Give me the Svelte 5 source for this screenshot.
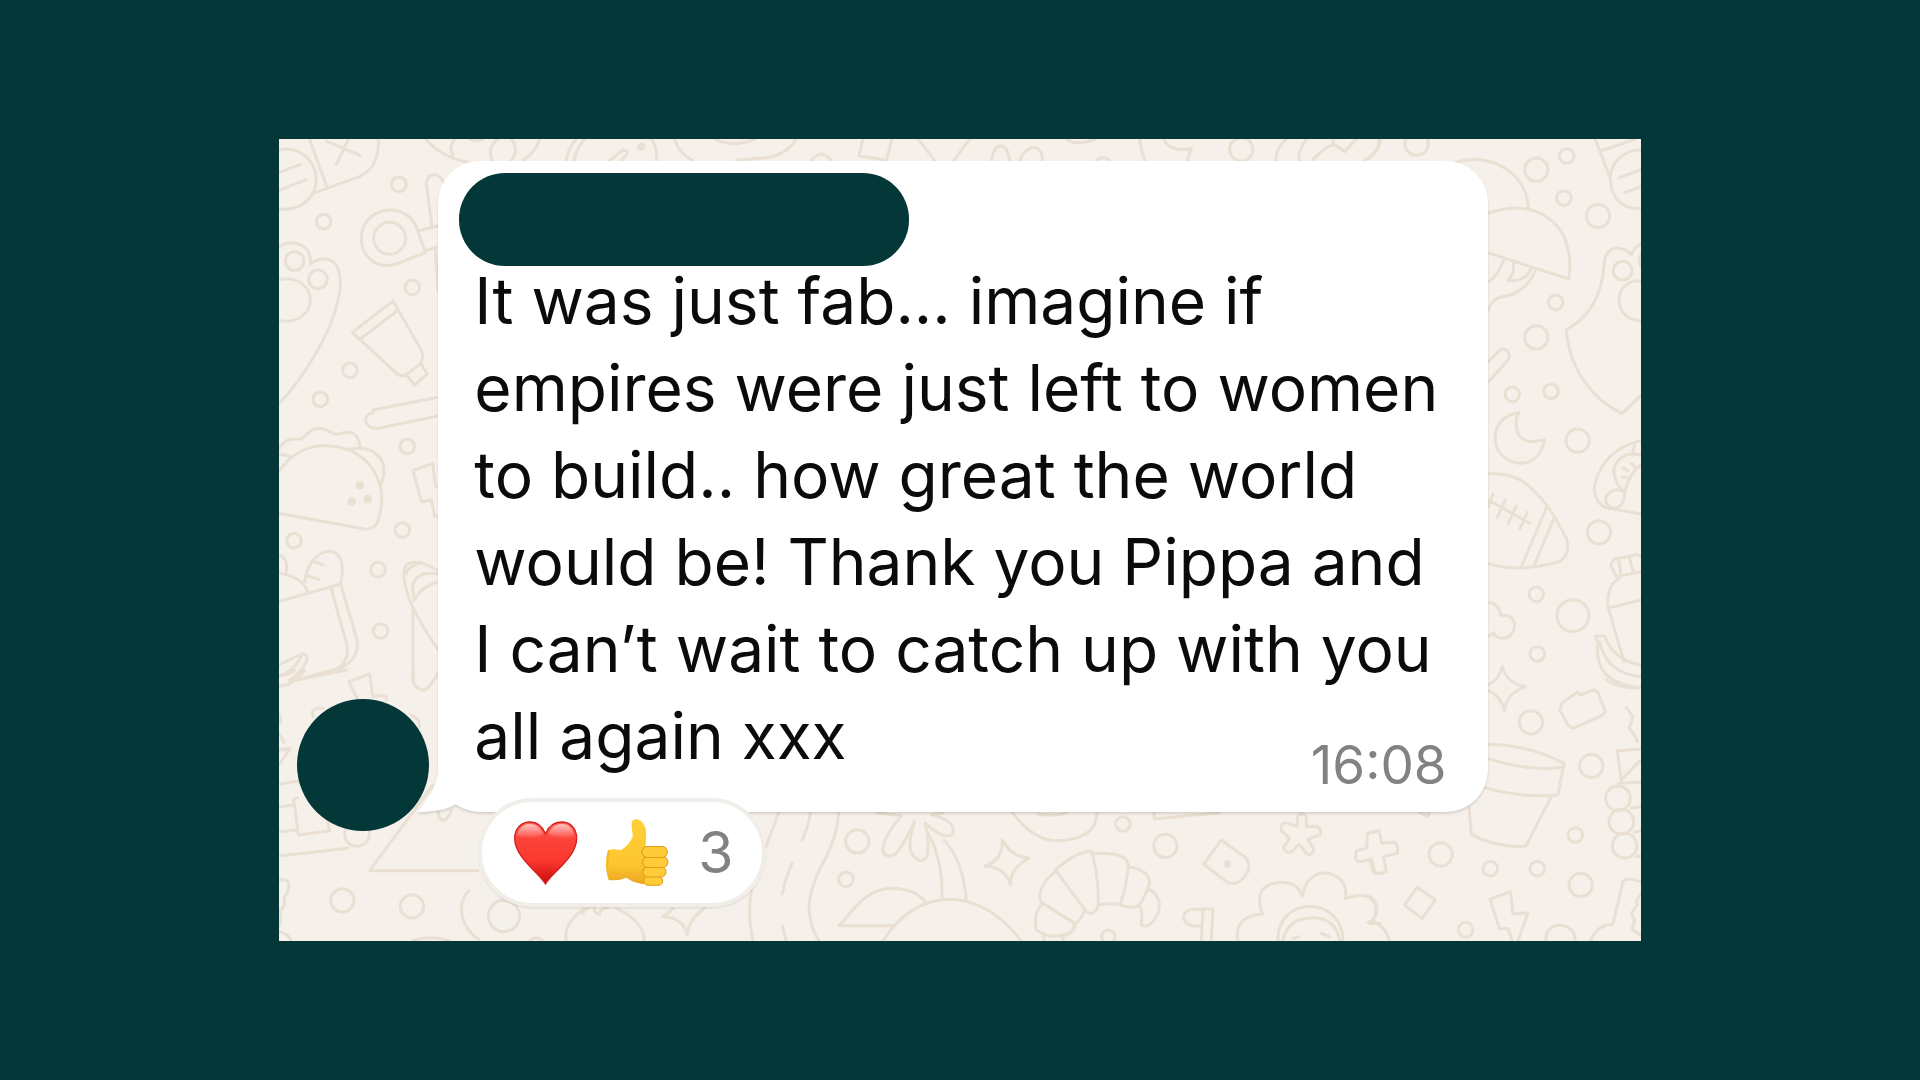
<!--
@component
A single group chat message on doodle wallpaper, with its sender details covered and a reactions pill below.
-->

<script lang="ts">
	interface Doodle {
		x: number;
		y: number;
		paths: string[];
		rings?: number[][];
		dots?: number[][];
	}

	const lines = [
		'It was just fab... imagine if',
		'empires were just left to women',
		'to build.. how great the world',
		'would be! Thank you Pippa and',
		'I can’t wait to catch up with you',
		'all again xxx'
	];
	const time = '16:08';
	const reactionCount = 3;

	// Each patch is drawn at three times its size, from its own origin
	const doodles: Doodle[] = [
		{
			x: 270,
			y: 130,
			paths: [
				'M120 28L172 172M130 190L270 140Q330 110 326 28M172 34L272 76M236 28L200 104',
				'M27 60C90 45 140 95 140 148C140 205 90 245 27 237M27 128L94 103M27 182L110 148',
				'M470 28Q510 80 600 98M555 28Q535 55 550 75',
				'M468 368L380 402C320 420 275 380 275 325C275 270 320 240 360 240C400 240 425 260 440 290Z',
				'M448 302L505 288M468 362L505 350M487 290L470 160Q475 130 500 135Q515 140 520 155M497 355L505 480',
				'M27 350Q60 330 95 345Q125 360 122 402Q160 375 190 395C220 420 215 480 200 530C180 610 100 750 27 822',
				'M27 450C80 435 122 470 122 510C122 550 80 585 27 570',
				'M370 513L248 607L375 725Q390 742 408 735L450 703Q465 685 455 660ZM272 627L382 543M410 735L435 765L473 732L455 703',
				'M310 840L505 802'
			],
			rings: [[388, 163, 22], [162, 275, 22], [428, 472, 22], [241, 721, 22], [152, 808, 22], [360, 325, 48], [75, 393, 28], [145, 448, 28]]
		},
		{
			x: 270,
			y: 400,
			paths: [
				'M310 38Q275 50 295 75Q305 88 330 84L505 48M27 10L40 0',
				'M27 150C40 120 60 115 95 117C120 100 120 85 150 85C180 88 185 105 205 103C240 90 265 95 272 140',
				'M27 215C70 155 120 135 175 137C260 140 310 190 330 250C342 290 335 340 322 370Q310 390 285 387L27 340',
				'M240 148C300 135 345 165 343 215Q342 235 335 250M27 165Q45 162 62 170',
				'M505 262L497 255L489 190L430 212L456 305L485 300L495 348L505 350',
				'M27 465Q55 470 50 515M27 518C80 530 105 545 115 580M27 605L213 552L262 720Q270 775 215 803L80 840M185 567L232 735Q240 780 205 805',
				'M105 545C110 500 140 455 180 453Q225 460 217 525L213 552M130 483L160 495M110 527L147 538',
				'M27 795L90 765Q115 755 112 780Q95 820 60 840M27 828Q70 815 95 770',
				'M505 513C460 485 430 480 410 495Q395 520 412 575Q430 640 505 748M505 522Q440 510 428 560L434 600Q455 560 505 545M430 625V840M410 520Q415 500 455 488'
			],
			rings: [[413, 139, 22], [398, 390, 22], [73, 422, 22], [325, 509, 22], [333, 693, 22]],
			dots: [[271, 256, 13], [294, 297, 13], [246, 305, 13]]
		},
		{
			x: 270,
			y: 670,
			paths: [
				'M27 18Q60 15 75 0M27 48Q70 48 105 0M80 30L230 0M430 0V30Q435 60 465 60Q480 55 505 10',
				'M265 88L237 35L300 12L310 80Q355 70 350 90M130 140Q120 110 160 115M425 135Q450 145 450 170',
				'M27 130Q40 150 30 160M27 190Q35 200 42 217M27 240L62 235L27 285M27 342L90 333M27 412L70 405M27 485L82 480M85 383L72 388L86 495L180 483L175 460M27 558L235 535',
				'M490 345L300 602H625M505 425Q510 455 525 450Q540 440 545 420',
				'M598 662Q560 700 585 760Q600 790 630 812M27 630Q60 625 57 650Q55 670 42 685Q50 705 30 725Q40 750 27 770M27 785Q55 790 65 812M430 812Q480 795 540 812M780 812Q800 795 820 812'
			],
			rings: [[262, 492, 37], [218, 691, 35], [427, 709, 35], [703, 738, 47]]
		},
		{
			x: 460,
			y: 780,
			paths: [
				'M320 483Q310 430 375 385M470 385Q550 420 555 483M370 400Q385 375 405 380Q400 400 420 403Q420 385 445 383',
				'M640 385Q620 405 608 410Q670 410 683 465Q685 420 735 385M957 98Q900 250 880 310Q860 390 880 483'
			]
		},
		{
			x: 760,
			y: 790,
			paths: [
				'M152 68L145 105L127 152M98 218Q75 270 68 312M68 408L80 453M237 68Q235 130 200 200Q150 290 148 350Q150 410 178 453',
				'M350 68L425 77Q365 150 370 185Q385 210 410 190Q440 150 465 93Q440 170 460 195Q485 225 502 200Q510 160 497 100Q560 155 580 130Q590 90 515 75L550 68',
				'M505 130Q550 210 547 325M553 150Q610 210 620 328M500 340Q470 295 390 295C320 300 290 350 238 407H400M370 453Q450 330 570 328Q690 330 785 453',
				'M728 150Q755 200 808 205Q750 235 753 284Q735 230 675 229Q730 210 728 150Z',
				'M758 68Q820 150 890 152Q1010 150 1012 68M835 72Q880 80 920 70',
				'M887 245Q840 280 840 325L848 340Q820 370 830 420Q870 445 900 437Q950 430 945 400L848 340M853 430V453M910 440V453'
			],
			rings: [[293, 154, 35], [259, 268, 22]]
		},
		{
			x: 1060,
			y: 790,
			paths: [
				'M283 68V87L480 68',
				'M-13 240Q50 185 95 183L100 200Q120 280 115 350Q100 380 80 365L-13 240M105 190Q200 185 207 225Q200 290 182 343Q150 338 118 345',
				'M207 230Q270 240 270 280Q250 340 230 350Q210 355 182 345M268 298Q310 320 295 370Q270 420 245 405Q250 370 240 345M75 360Q60 400 45 400L-50 340M45 400Q40 440 0 437',
				'M485 150L432 222L500 275Q530 290 550 265Q580 235 560 205Z',
				'M712 110L714 80Q725 62 740 80V110L770 108Q790 120 780 135L745 148L762 175Q760 198 742 192L718 162L697 185Q678 192 672 172L690 145L665 122Q660 100 680 98Z',
				'M958 122L925 128L922 140V175L890 182L887 200Q890 215 900 215L935 208L947 250L960 250',
				'M535 453Q520 380 608 372Q580 290 650 278Q710 270 728 318Q740 250 800 248Q865 260 858 325Q940 300 952 350Q955 385 925 398L960 400',
				'M655 453C650 315 850 315 850 453M670 453Q680 385 760 383Q830 385 840 453M700 445L718 440M785 430L810 440',
				'M425 453L430 357H460L455 453M430 357L395 358Q370 365 372 385Q380 410 410 408L427 408'
			],
			rings: [[190, 102, 22], [317, 168, 35], [146, 440, 20]],
			dots: [[504, 222, 11]]
		},
		{
			x: 1370,
			y: 130,
			paths: [
				'M0 85Q30 60 27 28M255 97C370 65 470 130 477 235',
				'M354 250Q440 220 500 245C590 280 610 370 597 447L354 368M403 388Q385 440 354 457M432 400L430 430L415 452Q470 455 485 415M497 422Q465 495 390 502Q365 510 354 545',
				'M354 697L390 660Q410 650 420 675L415 690L354 758',
				'M677 28L722 145M693 63L795 28M813 60C750 60 720 110 722 150C725 210 765 238 813 235M748 143L813 120M766 188L813 170',
				'M813 343Q790 355 785 375Q765 350 730 355Q702 370 703 410C695 500 660 560 590 600C600 720 670 810 757 850L813 797',
				'M813 452C770 450 747 480 748 512Q755 570 813 572M813 375Q805 393 813 410'
			],
			rings: [[141, 41, 35], [500, 119, 35], [685, 258, 35], [500, 622, 35], [591, 78, 22], [583, 204, 22], [558, 517, 22], [428, 793, 22], [544, 784, 22], [759, 422, 28]]
		},
		{
			x: 1370,
			y: 420,
			paths: [
				'M440 0Q435 60 485 65L525 60C515 105 490 130 450 130C400 125 376 90 376 50C380 10 400 -15 447 -22Q440 -10 440 0',
				'M354 162Q440 155 490 210C540 255 560 300 590 355Q605 400 570 425Q440 460 354 430M533 257L455 440M553 295L492 440',
				'M357 240L480 310M370 222L355 262M407 240L383 292M440 258L416 310M473 277L450 328',
				'M813 62Q700 90 675 195Q670 240 705 262L813 282M795 70L788 105M813 105Q750 90 732 150Q735 190 762 215M813 135Q780 160 765 215Q765 260 735 265Q700 255 710 230Q730 200 762 215M762 145L775 152M785 130L795 140M758 172H770',
				'M813 410L805 403L735 418Q720 430 725 440L740 470L813 455M748 425L755 465M780 415L790 455M748 475Q710 500 715 560L763 725M722 563L813 540',
				'M813 735Q730 720 705 648H677L685 670Q670 790 813 803M690 665Q710 760 813 770',
				'M354 547Q390 550 393 587Q430 580 435 615Q430 655 398 655Q380 655 372 638L354 650',
				'M354 795Q390 780 398 738Q410 790 468 800Q410 820 405 872Q395 830 354 810'
			],
			rings: [[624, 62, 35], [688, 337, 35], [500, 523, 22], [610, 587, 48], [503, 702, 22]]
		},
		{
			x: 1370,
			y: 680,
			paths: [
				'M0 460L28 452L37 490L75 487Q88 500 83 520L42 530L50 575Q30 585 12 578L0 540',
				'M578 68L625 35L632 45L670 30Q685 30 690 50L707 95Q700 105 690 110L610 145Q595 140 590 125L570 90Z',
				'M710 0Q760 30 813 22M770 83L790 110Q785 130 778 145Q795 160 803 185',
				'M354 193Q480 195 583 250L565 345Q460 355 345 323M354 235Q470 275 583 262M545 350L473 490Q470 502 445 500Q360 495 305 463L298 380',
				'M813 207L743 213L755 300L813 240M745 310L813 307M785 385L813 380M793 457L813 452M800 530L813 528',
				'M143 622L197 660L157 715L105 675Z',
				'M428 782L415 745L390 747L361 658L422 635L430 702L475 698L445 782',
				'M0 650Q30 680 10 725Q50 740 58 782M0 730H10M528 782Q530 737 572 735Q615 740 617 782M663 782Q680 735 730 733L760 605Q770 590 813 605M813 645Q795 665 803 675L785 700L795 720L787 748L813 765M150 397L175 410L178 397'
			],
			rings: [[484, 127, 35], [665, 258, 35], [213, 523, 35], [633, 615, 35], [617, 465, 22], [362, 566, 22], [503, 566, 22], [288, 749, 22], [745, 355, 37], [755, 425, 37], [765, 497, 37]]
		},
		{
			x: 430,
			y: 135,
			paths: [
				'M205 12Q170 40 188 76M245 12Q270 45 245 76M330 12Q320 50 280 76M120 12Q140 24 160 12',
				'M440 12Q415 40 410 76M465 12Q440 40 433 76M540 76L580 45Q600 45 590 60L575 76M665 12Q685 40 680 76',
				'M735 12Q750 60 790 76M1100 12Q1070 60 1010 68L920 76M855 12Q910 40 975 12M1145 76Q1175 40 1205 76M1300 12L1288 62L1370 76L1387 12'
			],
			dots: [[635, 35, 12]]
		},
		{
			x: 920,
			y: 135,
			paths: [
				'M-5 12L45 76M150 12L103 76M217 76Q220 35 243 32Q265 35 270 76M300 76Q320 35 347 37Q370 45 368 76',
				'M440 12Q470 35 525 12M530 76Q550 60 570 76M660 12Q665 50 675 76M733 12Q745 50 815 42L803 76',
				'M1100 12Q1070 40 1068 76M1160 12Q1130 60 1140 76M1178 76Q1230 20 1250 32L1275 50L1310 12M1380 12Q1390 40 1335 76M1240 12V28'
			],
			rings: [[965, 43, 35]]
		}
	];
</script>

<main>
	<section class="chat">
		<svg class="wallpaper" viewBox="279 139 1362 802" preserveAspectRatio="xMidYMid slice" aria-hidden="true">
			{#each doodles as patch}
				<g transform="translate({patch.x} {patch.y}) scale(0.33333)">
					{#each patch.paths as d}
						<path {d} />
					{/each}
					{#each patch.rings ?? [] as [cx, cy, r]}
						<circle {cx} {cy} {r} />
					{/each}
					{#each patch.dots ?? [] as [cx, cy, r]}
						<circle class="dot" {cx} {cy} {r} />
					{/each}
				</g>
			{/each}
		</svg>

		<article class="message">
			<div class="avatar"></div>
			<div class="bubble">
				<svg class="tail" viewBox="0 0 60 60" aria-hidden="true">
					<path d="M20 0V18C20 32 11 46 0 60C14 60 29 58 38 52L60 40V0Z" />
				</svg>
				<div class="sender"></div>
				<p class="text">
					{#each lines as line}
						<span>{line}</span>
					{/each}
				</p>
				<time>{time}</time>
			</div>
		</article>

		<button class="reactions" type="button" aria-label="{reactionCount} reactions">
			<svg viewBox="150 116 200 200" aria-hidden="true">
				<defs>
					<linearGradient id="heart" x1="0" y1="0" x2="0" y2="1">
						<stop offset="0" stop-color="#ff6a60" />
						<stop offset="0.3" stop-color="#fb4138" />
						<stop offset="0.6" stop-color="#fc3a30" />
						<stop offset="1" stop-color="#c80d0c" />
					</linearGradient>
					<linearGradient id="shine" x1="0" y1="0" x2="0" y2="1">
						<stop offset="0" stop-color="#fff" stop-opacity="0.6" />
						<stop offset="1" stop-color="#fff" stop-opacity="0" />
					</linearGradient>
				</defs>
				<path
					d="M250 310C230 275 158 230 158 174C158 144 178 125 204 125C226 125 241 139 250 160C259 139 275 125 298 125C324 125 343 144 343 174C343 230 270 275 250 310Z"
					fill="url(#heart)"
					stroke="#d5201b"
					stroke-width="4"
				/>
				<path d="M166 166C168 145 184 131 204 131C222 131 234 142 242 160Q205 185 166 166Z" fill="url(#shine)" />
				<path d="M259 160C267 142 280 131 298 131C319 131 333 145 335 166Q300 185 259 160Z" fill="url(#shine)" />
			</svg>
			<svg viewBox="421 116 200 200" aria-hidden="true">
				<defs>
					<linearGradient id="skin" x1="0" y1="0" x2="0" y2="1">
						<stop offset="0" stop-color="#ffcf38" />
						<stop offset="0.7" stop-color="#fdc62f" />
						<stop offset="1" stop-color="#eba522" />
					</linearGradient>
				</defs>
				<path
					d="M435 209Q450 203 474 209C489 200 507 181 510 165L506 133Q506 117 523 117Q541 120 549 147Q552 170 548 196L580 235L562 310C530 312 507 303 491 291Q465 302 438 298Q423 257 435 209Z"
					fill="url(#skin)"
				/>
				<g fill="#ffcb37" stroke="#e09a18" stroke-width="3">
					<rect x="543" y="287" width="56" height="27" rx="13" />
					<rect x="540" y="259" width="69" height="30" rx="15" />
					<rect x="539" y="229" width="76" height="32" rx="16" />
					<rect x="537" y="198" width="76" height="33" rx="16" />
				</g>
				<path d="M439 211Q428 255 440 293" fill="none" stroke="#f5b526" stroke-width="5" />
			</svg>
			<span>{reactionCount}</span>
		</button>
	</section>
</main>

<style>
	:global(body) {
		margin: 0;
		background: #043738;
	}

	main {
		box-sizing: border-box;
		display: flex;
		justify-content: center;
		align-items: center;
		min-height: 100vh;
		font-family: Inter, "Liberation Sans", sans-serif;
	}

	.chat {
		position: relative;
		box-sizing: border-box;
		width: 70.9%;
		padding: 22px 153px 34px 18px;
		overflow: hidden;
		background: #f5f1ea;
	}

	.wallpaper {
		position: absolute;
		inset: 0;
		width: 100%;
		height: 100%;
		fill: none;
		stroke: #e9dfd2;
		stroke-width: 9;
		stroke-linecap: round;
		stroke-linejoin: round;
	}

	.wallpaper .dot {
		fill: #e9dfd2;
		stroke: none;
	}

	.message {
		position: relative;
		display: flex;
		align-items: flex-end;
		gap: 9px;
	}

	.avatar {
		flex: none;
		z-index: 1;
		width: 132px;
		height: 132px;
		margin-bottom: -19px;
		border-radius: 50%;
		background: #043738;
	}

	.bubble {
		position: relative;
		flex: 1;
		display: flex;
		flex-direction: column;
		padding: 12px 41px 17px 21px;
		border-radius: 42px;
		background: #fff;
		filter: drop-shadow(0 2px 1px rgba(60, 50, 40, 0.16));
	}

	.tail {
		position: absolute;
		left: -20px;
		bottom: 0;
		width: 60px;
		height: 60px;
		fill: #fff;
	}

	.sender {
		width: 450px;
		height: 93px;
		border-radius: 46px;
		background: #043738;
	}

	.text {
		position: relative;
		margin: -9px 0 0 15px;
		font-size: 64px;
		line-height: 87px;
		color: #0b0b0b;
	}

	.text span {
		display: block;
		white-space: nowrap;
	}

	time {
		align-self: flex-end;
		margin-top: -44px;
		font-size: 53px;
		line-height: 60px;
		color: #828282;
	}

	.reactions {
		position: relative;
		display: flex;
		align-items: center;
		gap: 24px;
		height: 109px;
		margin: -14px 0 0 181px;
		padding: 0 28px 0 30px;
		border: 4px solid #f1eeea;
		border-radius: 55px;
		background: #fff;
		box-shadow: 0 2px 1px rgba(60, 50, 40, 0.08);
		font: inherit;
		font-size: 57px;
		color: #828282;
	}

	.reactions svg {
		width: 67px;
		height: 67px;
	}

	.reactions span {
		margin-left: 4px;
	}
</style>
